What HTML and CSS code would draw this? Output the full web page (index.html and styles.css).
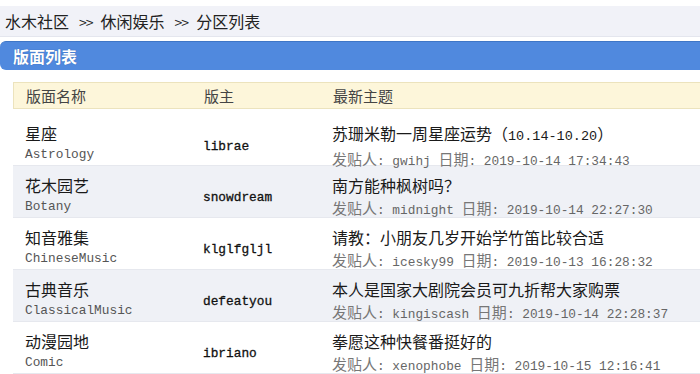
FILE: index.html
```html
<!DOCTYPE html>
<html lang="zh-CN">
<head>
    <meta charset="UTF-8">
    <title>分区列表</title>
    <link rel="stylesheet" href="styles.css">
</head>
<body>
    <div class="crumbs">水木社区<span class="sep">&gt;&gt;</span>休闲娱乐<span class="sep">&gt;&gt;</span>分区列表</div>
    <div class="title-bar">版面列表</div>

    <div class="board-list">
        <div class="row head">
            <div class="cell">版面名称</div>
            <div class="cell">版主</div>
            <div class="cell">最新主题</div>
        </div>

        <div class="row">
            <div class="cell"><div class="cn">星座</div><div class="en">Astrology</div></div>
            <div class="cell mod">librae</div>
            <div class="cell"><div class="topic">苏珊米勒一周星座运势（<span class="num">10.14-10.20</span>）</div><div class="meta">发贴人<span class="lat">: gwihj </span>日期<span class="lat">: 2019-10-14 17:34:43</span></div></div>
        </div>
        <div class="row alt">
            <div class="cell"><div class="cn">花木园艺</div><div class="en">Botany</div></div>
            <div class="cell mod">snowdream</div>
            <div class="cell"><div class="topic">南方能种枫树吗？</div><div class="meta">发贴人<span class="lat">: midnight </span>日期<span class="lat">: 2019-10-14 22:27:30</span></div></div>
        </div>
        <div class="row">
            <div class="cell"><div class="cn">知音雅集</div><div class="en">ChineseMusic</div></div>
            <div class="cell mod">klglfgljl</div>
            <div class="cell"><div class="topic">请教：小朋友几岁开始学竹笛比较合适</div><div class="meta">发贴人<span class="lat">: icesky99 </span>日期<span class="lat">: 2019-10-13 16:28:32</span></div></div>
        </div>
        <div class="row alt">
            <div class="cell"><div class="cn">古典音乐</div><div class="en">ClassicalMusic</div></div>
            <div class="cell mod">defeatyou</div>
            <div class="cell"><div class="topic">本人是国家大剧院会员可九折帮大家购票</div><div class="meta">发贴人<span class="lat">: kingiscash </span>日期<span class="lat">: 2019-10-14 22:28:37</span></div></div>
        </div>
        <div class="row">
            <div class="cell"><div class="cn">动漫园地</div><div class="en">Comic</div></div>
            <div class="cell mod">ibriano</div>
            <div class="cell"><div class="topic">拳愿这种快餐番挺好的</div><div class="meta">发贴人<span class="lat">: xenophobe </span>日期<span class="lat">: 2019-10-15 12:16:41</span></div></div>
        </div>
    </div>
</body>
</html>
```

FILE: styles.css
```css
body {
    margin: 0;
    background-color: #ffffff;
    font-family: "Noto Sans CJK SC", sans-serif;
    color: #222;
    overflow: hidden;
}
.crumbs {
    margin-top: 6px;
    height: 30px;
    line-height: 30px;
    padding-left: 5px;
    font-size: 16px;
    background-color: #f1f2f8;
    border-bottom: 1px solid #e4e6ee;
}
.sep {
    margin: 0 8px 0 10px;
    font-size: 14px;
    letter-spacing: -1px;
}
.title-bar {
    margin-top: 4px;
    height: 28px;
    line-height: 28px;
    padding-left: 13px;
    font-size: 16px;
    font-weight: bold;
    color: #fff;
    background-color: #5089de;
    border-top: 1px solid #3f76c6;
    border-radius: 6px 0 0 6px;
    text-shadow: 0 0 1px #2d5ea8;
}
.board-list {
    margin: 12px 0 0 13px;
}
.row {
    display: grid;
    grid-template-columns: 178px 129px 1fr;
    height: 52px;
    border-bottom: 1px solid #e6e8ee;
    box-sizing: border-box;
}
.row.alt {
    background-color: #eff1f6;
}
.row.head {
    height: 27px;
    margin-bottom: 5px;
    background-color: #fdf6da;
    border: 1px solid #ece3bd;
    border-right: none;
    color: #444;
    font-size: 15px;
}
.row.head .cell {
    line-height: 25px;
    padding-top: 0;
}
.cell {
    padding: 8px 0 0 12px;
    white-space: nowrap;
}
.cn, .topic {
    font-size: 16px;
    line-height: 23px;
    color: #1a1a1a;
}
.en, .lat, .mod, .num {
    font-family: "Liberation Mono", "Noto Sans CJK SC", monospace;
}
.en {
    font-size: 12.8px;
    line-height: 20px;
    color: #555;
}
.num {
    font-size: 13.5px;
}
.mod {
    display: flex;
    align-items: center;
    padding-top: 8px;
    padding-bottom: 2px;
    font-size: 12.8px;
    color: #111;
    -webkit-text-stroke: 0.3px #111;
}
.meta {
    font-size: 15px;
    line-height: 22px;
    color: #777;
}
.lat {
    font-size: 12.8px;
    color: #666;
}
```
